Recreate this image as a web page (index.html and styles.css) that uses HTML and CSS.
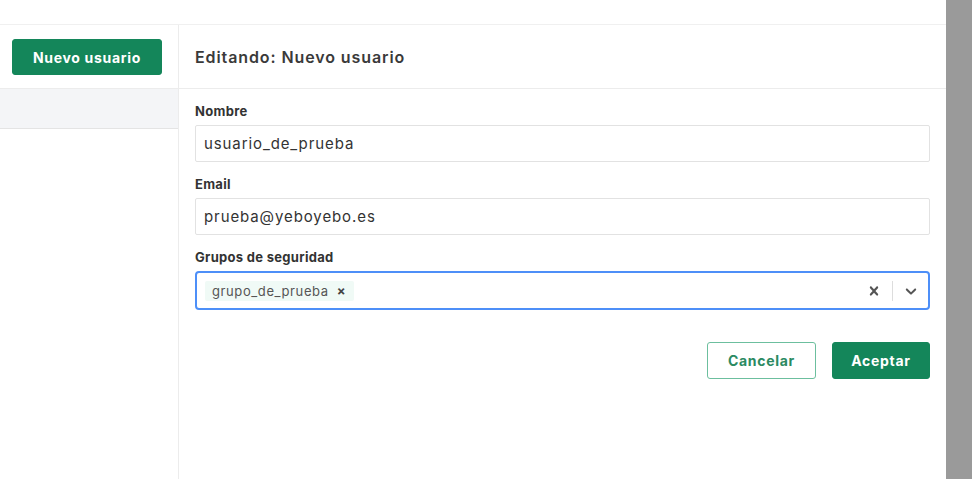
FILE: index.html
```html
<!DOCTYPE html>
<html lang="es">
<head>
<meta charset="utf-8">
<link rel="stylesheet" href="styles.css">
</head>
<body>
<div class="page">
  <div class="main">
    <div class="topbar"></div>
    <div class="body">
      <aside class="sidebar">
        <div class="side-head">
          <button class="btn btn-primary btn-new">Nuevo usuario</button>
        </div>
        <div class="side-row"></div>
      </aside>
      <section class="content">
        <div class="content-head">
          <h1 class="title">Editando: Nuevo usuario</h1>
        </div>
        <form class="form">
          <label class="label">Nombre</label>
          <div class="input">usuario_de_prueba</div>
          <label class="label">Email</label>
          <div class="input">prueba@yeboyebo.es</div>
          <label class="label">Grupos de seguridad</label>
          <div class="select">
            <div class="chips">
              <span class="chip">grupo_de_prueba <span class="chip-x">×</span></span>
            </div>
            <div class="indicators">
              <svg class="ico clear" viewBox="0 0 20 20" width="20" height="20"><path d="M14.348 14.849c-0.469 0.469-1.229 0.469-1.697 0l-2.651-3.030-2.651 3.029c-0.469 0.469-1.229 0.469-1.697 0-0.469-0.469-0.469-1.229 0-1.697l2.758-3.15-2.759-3.152c-0.469-0.469-0.469-1.228 0-1.697s1.228-0.469 1.697 0l2.652 3.031 2.651-3.031c0.469-0.469 1.228-0.469 1.697 0s0.469 1.229 0 1.697l-2.758 3.152 2.758 3.15c0.469 0.469 0.469 1.229 0 1.698z" fill="#555"/></svg>
              <span class="sep"></span>
              <svg class="ico chev" viewBox="0 0 20 20" width="20" height="20"><path d="M4.516 7.548c0.436-0.446 1.043-0.481 1.576 0l3.908 3.747 3.908-3.747c0.533-0.481 1.141-0.446 1.574 0 0.436 0.445 0.408 1.197 0 1.615-0.406 0.418-4.695 4.502-4.695 4.502-0.217 0.223-0.502 0.335-0.787 0.335s-0.570-0.112-0.789-0.335c0 0-4.287-4.084-4.695-4.502s-0.436-1.17 0-1.615z" fill="#555"/></svg>
            </div>
          </div>
          <div class="actions">
            <button type="button" class="btn btn-outline">Cancelar</button>
            <button type="button" class="btn btn-primary">Aceptar</button>
          </div>
        </form>
      </section>
    </div>
  </div>
  <div class="scrim"></div>
</div>
</body>
</html>
```
FILE: styles.css
```css
* { box-sizing: border-box; }
html, body { margin: 0; padding: 0; }
body {
  font-family: "Inter", "Liberation Sans", sans-serif;
  color: #333;
  background: #fff;
}
.page { display: flex; width: 972px; height: 479px; overflow: hidden; }
.main { width: 946px; display: flex; flex-direction: column; }
.scrim { width: 26px; background: #9a9a9a; }
.topbar { height: 25px; border-bottom: 1px solid #f0f0f0; }
.body { display: flex; flex: 1; }
.sidebar { width: 179px; border-right: 1px solid #ececec; }
.side-head { height: 64px; padding: 14px 0 0 12px; border-bottom: 1px solid #ececec; }
.side-row { height: 40px; background: #f4f5f7; border-bottom: 1px solid #e4e4e4; }
.btn {
  font-family: inherit;
  font-weight: 700;
  font-size: 14px;
  letter-spacing: 0.7px;
  border-radius: 3px;
  height: 37px;
  cursor: pointer;
}
.btn-primary { background: #14865a; color: #fff; border: 1px solid #14865a; }
.btn-new { width: 150px; height: 36px; }
.btn-outline { background: #fff; color: #2b8a62; border: 1px solid #6cbf9e; width: 110px; }
.content { flex: 1; }
.content-head {
  height: 64px; padding-left: 16px; display: flex; align-items: center;
  border-bottom: 1px solid #ececec;
}
.title { margin: 0; font-size: 16px; font-weight: 600; color: #3a3a3a; letter-spacing: 0.9px; }
.form { padding: 14px 16px 0 16px; display: flex; flex-direction: column; }
.label { font-size: 13px; font-weight: 700; color: #333; margin-bottom: 6px; line-height: 16px; letter-spacing: 0.3px; }
.input {
  height: 37px; border: 1px solid #e2e2e2; border-radius: 2px;
  padding: 0 8px; display: flex; align-items: center;
  font-size: 15px; color: #333; margin-bottom: 14px; letter-spacing: 0.9px;
}
.select {
  height: 39px; border: 2px solid #4d8ff8; border-radius: 4px;
  display: flex; align-items: center; justify-content: space-between; padding: 0 0 0 8px;
}
.chip {
  display: inline-flex; align-items: center; height: 20px; padding: 0 8px 0 7px;
  background: #f0faf6; color: #555; font-size: 13px; border-radius: 2px; letter-spacing: 0.6px;
}
.chip-x { font-weight: 700; margin-left: 8px; font-size: 13px; color: #444; }
.indicators { display: flex; align-items: center; height: 100%; }
.ico { display: block; }
.clear { margin-right: 9px; width: 18px; height: 18px; }
.sep { width: 1px; height: 20px; background: #ddd; }
.chev { margin: 0 8px 0 9px; width: 18px; height: 18px; }
.actions { display: flex; justify-content: flex-end; gap: 16px; margin-top: 32px; }
.btn-outline { width: 109px; }
.actions .btn-primary { width: 98px; }
```
